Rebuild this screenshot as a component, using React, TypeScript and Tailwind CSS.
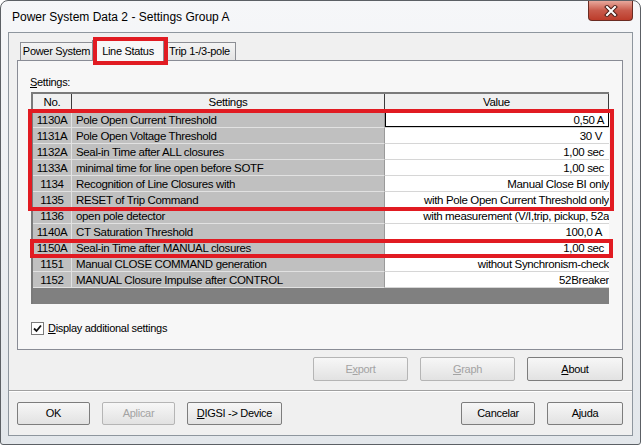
import React from "react";

const rows = [
  { no: "1130A", name: "Pole Open Current Threshold", value: "0,50 A", pad: "pr-[5px]", focus: true },
  { no: "1131A", name: "Pole Open Voltage Threshold", value: "30 V", pad: "pr-[7px]" },
  { no: "1132A", name: "Seal-in Time after ALL closures", value: "1,00 sec", pad: "pr-[5px]" },
  { no: "1133A", name: "minimal time for line open before SOTF", value: "1,00 sec", pad: "pr-[5px]" },
  { no: "1134", name: "Recognition of Line Closures with", value: "Manual Close BI only", pad: "pr-0" },
  { no: "1135", name: "RESET of Trip Command", value: "with Pole Open Current Threshold only", pad: "pr-0" },
  { no: "1136", name: "open pole detector", value: "with measurement (V/I,trip, pickup, 52a", pad: "pr-0" },
  { no: "1140A", name: "CT Saturation Threshold", value: "100,0 A", pad: "pr-[7px]" },
  { no: "1150A", name: "Seal-in Time after MANUAL closures", value: "1,00 sec", pad: "pr-[5px]" },
  { no: "1151", name: "Manual CLOSE COMMAND generation", value: "without Synchronism-check", pad: "pr-0" },
  { no: "1152", name: "MANUAL Closure Impulse after CONTROL", value: "52Breaker", pad: "pr-0" },
];

function Button({ children, w, disabled }: { children: React.ReactNode; w: string; disabled?: boolean }) {
  return (
    <div
      className={`${w} h-full flex items-center justify-center rounded-[2px] border bg-gradient-to-b from-[#f7f7f7] to-[#e2e2e2] ${
        disabled ? "border-[#b5b5b5] text-[#a3a3a3]" : "border-[#7d7d7d] text-black"
      }`}
    >
      {children}
    </div>
  );
}

export default function App() {
  return (
    <div className="w-[641px] h-[445px] overflow-hidden bg-white font-['Liberation_Sans',Arial,sans-serif]">
      <div className="relative w-[641px] h-[445px] rounded-t-[8px] rounded-b-[3px] border border-[#5c6065] bg-gradient-to-b from-[#f6f7f9] to-[#e3e7eb] flex flex-col">
        {/* title bar */}
        <div className="h-[31px] flex justify-between">
          <div className="pl-[11px] pt-[9px] text-[12px] leading-[14px] text-black">
            Power System Data 2 - Settings Group A
          </div>
          <div className="mr-[7px] w-[45px] h-[20px] rounded-b-[4px] border border-t-0 border-[#6a2b22] bg-gradient-to-b from-[#e7a89c] via-[#c85a4b] to-[#bc3b2a] flex items-center justify-center">
            <svg width="14" height="12" viewBox="0 0 14 12">
              <path d="M3 2 L11 10 M11 2 L3 10" stroke="#4a1f18" strokeWidth="4" strokeLinecap="square" />
              <path d="M3 2 L11 10 M11 2 L3 10" stroke="#ffffff" strokeWidth="2" strokeLinecap="square" />
            </svg>
          </div>
        </div>

        {/* client area */}
        <div className="mx-[7px] h-[404px] border border-[#8e969e] bg-[#f0f0f0] flex flex-col text-[11px] tracking-[-0.3px]">
          {/* tabs */}
          <div className="pt-[7px] pl-[11px] h-[27px] flex items-end relative z-10">
            <div className="w-[73px] h-[18px] border border-b-0 border-[#8c8e94] bg-gradient-to-b from-[#f4f4f4] to-[#e4e4e4] flex items-center justify-center">
              Power System
            </div>
            <div className="w-[72px] -mx-[1px] border border-b-0 border-[#8c8e94] bg-[#f7f7f7] flex items-center justify-center mb-[-1px] h-[21px]">
              Line Status
            </div>
            <div className="w-[73px] h-[18px] border border-b-0 border-[#8c8e94] bg-gradient-to-b from-[#f4f4f4] to-[#e4e4e4] flex items-center justify-center">
              Trip 1-/3-pole
            </div>
          </div>

          {/* tab panel */}
          <div className="ml-[8px] w-[606px] h-[290px] border border-[#898c95] bg-[#f7f7f7] flex flex-col">
            <div className="mt-[14px] ml-[12px] h-[14px] leading-[14px]">
              <span className="underline">S</span>ettings:
            </div>

            {/* table */}
            <div className="mt-[3px] ml-[13px] w-[578px] border-t-2 border-l-2 border-[#7a7a7a] text-[11.5px] tracking-[-0.35px] flex flex-col">
              <div className="h-[18px] flex bg-[#f0f0f0]">
                <div className="w-[39px] border-r border-b border-r-[#3c3c3c] border-b-[#cfcfcf] flex items-center justify-center">No.</div>
                <div className="w-[313px] border-r border-b border-r-[#3c3c3c] border-b-[#cfcfcf] flex items-center justify-center">Settings</div>
                <div className="w-[224px] border-r border-b border-r-[#3c3c3c] border-b-[#cfcfcf] flex items-center justify-center">Value</div>
              </div>
              {rows.map((r) => (
                <div key={r.no} className="h-[16px] flex leading-[16px]">
                  <div className="w-[39px] bg-[#c0c0c0] border-r border-b border-[#e2e2e2] text-center">{r.no}</div>
                  <div className="w-[313px] bg-[#c0c0c0] border-r border-b border-r-[#9a9a9a] border-b-[#e2e2e2] pl-[4px] whitespace-nowrap overflow-hidden">
                    {r.name}
                  </div>
                  <div
                    className={`w-[224px] bg-white border-b border-[#d6d6d6] text-right whitespace-nowrap overflow-hidden ${r.pad} ${
                      r.focus ? "shadow-[inset_0_0_0_1px_#000]" : ""
                    }`}
                  >
                    {r.value}
                  </div>
                </div>
              ))}
              <div className="h-[16px] w-[576px] bg-[#808080]" />
            </div>

            {/* checkbox */}
            <div className="mt-[18px] ml-[13px] flex items-center gap-[4px] h-[13px]">
              <div className="w-[13px] h-[13px] border border-[#7b7b7b] bg-white flex items-center justify-center">
                <svg width="9" height="9" viewBox="0 0 9 9">
                  <path d="M1 4.5 L3.5 7 L8 1.5" stroke="#111" strokeWidth="1.8" fill="none" />
                </svg>
              </div>
              <span>
                <span className="underline">D</span>isplay additional settings
              </span>
            </div>
          </div>

          {/* panel buttons */}
          <div className="mt-[7px] h-[24px] pr-[9px] flex justify-end gap-[12px]">
            <Button w="w-[95px]" disabled>
              E<span className="underline">x</span>port
            </Button>
            <Button w="w-[95px]" disabled>
              <span className="underline">G</span>raph
            </Button>
            <Button w="w-[96px]">
              <span className="underline">A</span>bout
            </Button>
          </div>

          <div className="mt-[9px] border-t border-b border-t-[#a0a0a0] border-b-white" />

          {/* dialog buttons */}
          <div className="mt-[10px] h-[23px] px-[8px] pr-[9px] flex justify-between">
            <div className="flex gap-[12px] h-full">
              <Button w="w-[73px]">OK</Button>
              <Button w="w-[73px]" disabled>
                Aplicar
              </Button>
              <Button w="w-[95px]">
                <span className="underline">D</span>IGSI -&gt; Device
              </Button>
            </div>
            <div className="flex gap-[12px] h-full">
              <Button w="w-[74px]">Cancelar</Button>
              <Button w="w-[76px]">Ajuda</Button>
            </div>
          </div>
        </div>

        {/* red highlight annotations */}
        <div className="absolute left-[92px] top-[36px] w-[75px] h-[28px] border-4 border-[#e11b22] z-20" />
        <div className="absolute left-[27px] top-[108px] w-[586px] h-[102px] border-4 border-[#e11b22] z-20" />
        <div className="absolute left-[29px] top-[238px] w-[583px] h-[19px] border-4 border-[#e11b22] z-20" />
      </div>
    </div>
  );
}
